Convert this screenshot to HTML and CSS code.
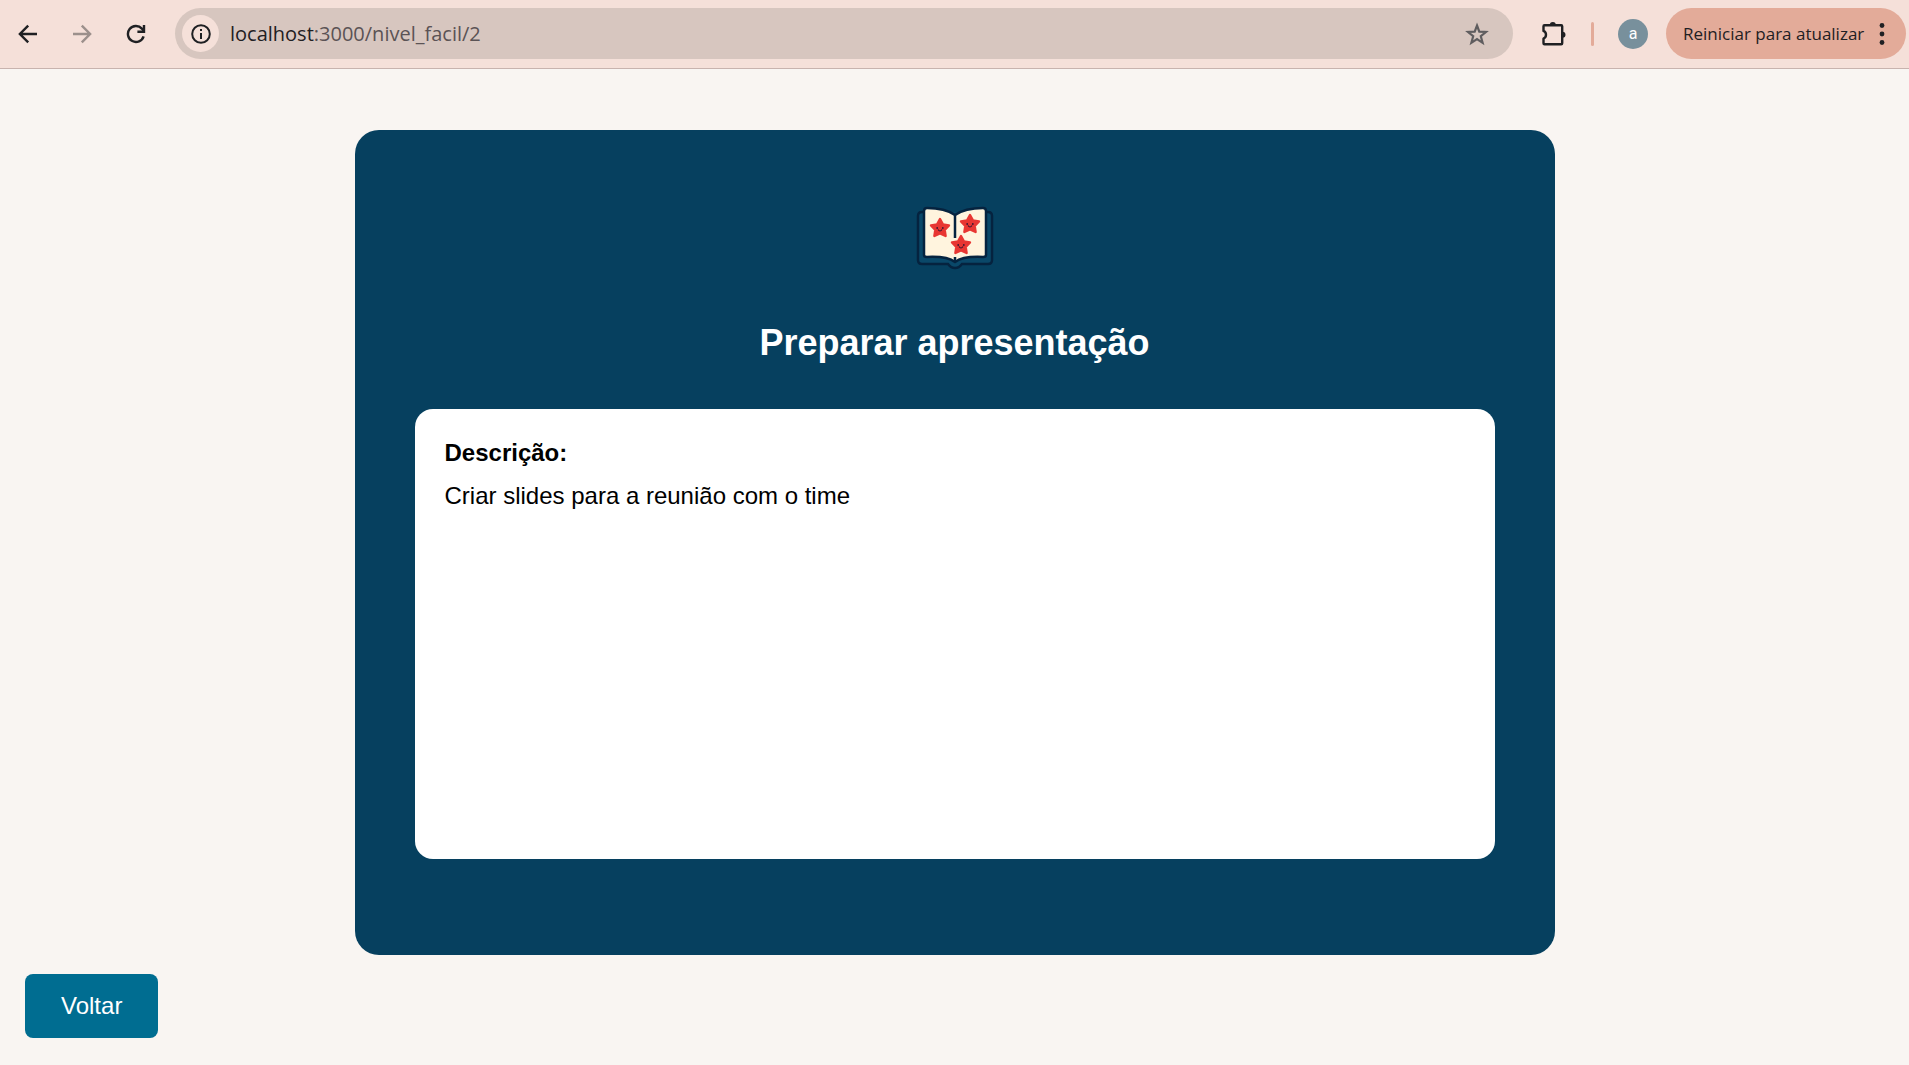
FILE: index.html
```html
<!DOCTYPE html>
<html lang="pt-BR">
<head>
<meta charset="utf-8">
<meta name="viewport" content="width=device-width, initial-scale=1">
<title>Preparar apresentação</title>
<link rel="stylesheet" href="styles.css">
</head>
<body>
<header class="toolbar">
  <nav class="nav" aria-label="Navegação">
    <button class="icon-btn" type="button" aria-label="Voltar página">
      <svg width="20" height="20" viewBox="0 0 20 20" fill="none" stroke="#1f2023" stroke-width="2.4"><path d="M19 10H2.500M10.200 1.700 1.900 10l8.300 8.300"/></svg>
    </button>
    <button class="icon-btn" type="button" aria-label="Avançar" disabled>
      <svg width="20" height="20" viewBox="0 0 20 20" fill="none" stroke="#9c908c" stroke-width="2.400"><path d="M1 10h16.500M9.800 1.700 18.100 10l-8.300 8.300"/></svg>
    </button>
    <button class="icon-btn" type="button" aria-label="Recarregar">
      <svg width="20" height="20" viewBox="0 0 20 20" fill="none" stroke="#1f2023" stroke-width="2.400"><path d="M17.600 12.300A8 8 0 1 1 15.900 4.600L18 7"/><path d="M18 1v6.700h-6.600"/></svg>
    </button>
  </nav>
  <div class="address">
    <button class="site-info" type="button" aria-label="Informações do site">
      <svg width="20" height="20" viewBox="0 0 20 20" fill="none" stroke="#1f2023" stroke-width="2"><circle cx="10" cy="10" r="8.800"/><path d="M10 9v6M10 5v2"/></svg>
    </button>
    <div class="url"><span class="host">localhost</span>:3000/nivel_facil/2</div>
    <button class="star" type="button" aria-label="Adicionar aos favoritos">
      <svg width="24" height="24" viewBox="0 0 24 24" fill="none" stroke="#5f5d5f" stroke-width="2.200"><path d="m12 3.500 2.300 6.100 6.700.4-5.200 4.200 1.800 6.600-5.600-3.700-5.600 3.700 1.800-6.600L3 10l6.700-.4z"/></svg>
    </button>
  </div>
  <div class="actions">
    <button class="icon-btn" type="button" aria-label="Extensões">
      <svg width="26" height="26" viewBox="0 0 26 26"><path d="M3.500 4.300h16.700q1 0 1 1v17q0 1-1 1H3.500q-1 0-1-1v-4.600a4.300 4.300 0 0 0 0-7.800V5.300q0-1 1-1z" fill="none" stroke="#1f2023" stroke-width="2.400" stroke-linejoin="round"/><path d="M8.800 4a3 3 0 0 1 6 0zM21.500 10.800a3 3 0 0 1 0 6z" fill="#1f2023"/></svg>
    </button>
    <span class="divider"></span>
    <button class="avatar" type="button" aria-label="Perfil">a</button>
    <button class="update" type="button">Reiniciar para atualizar
      <svg width="6" height="24" viewBox="0 0 6 24" fill="#1f2023"><circle cx="3" cy="3.500" r="2.400"/><circle cx="3" cy="12" r="2.400"/><circle cx="3" cy="20.500" r="2.400"/></svg>
    </button>
  </div>
</header>
<main class="page">
  <article class="card">
    <svg class="book" width="96" height="96" viewBox="0 0 96 96" aria-hidden="true">
      <path d="M17 16h-2q-4 0-4 4v44q0 4 4 4h26q3 4 7 4t7-4h26q4 0 4-4V20q0-4-4-4h-2" fill="#0a4869" stroke="#05233f" stroke-width="2.500"/>
      <path d="M17 15q0-3 3-3 18 0 28 7 10-7 28-7 3 0 3 3v44q0 2-3 2-20-1-28 5-8-6-28-5-3 0-3-2z" fill="#fff4de" stroke="#05233f" stroke-width="2.500" stroke-linejoin="round"/>
      <path d="M48 19v23M48 61v5" stroke="#05233f" stroke-width="2.500"/>
      <defs>
        <g id="starfish">
          <path d="M0-9 2.900-3.600 9-2.600 4.700 1.900 5.600 8 0 5.400-5.600 8l.9-6.100L-9-2.600l6.100-1z" fill="#e83632" stroke="#e83632" stroke-width="2.400" stroke-linejoin="round"/>
          <circle cx="-2.800" cy="0" r=".9" fill="#3c1832"/><circle cx="2.800" cy="0" r=".9" fill="#3c1832"/>
          <path d="M-2 1.500q2 3 4 0" fill="none" stroke="#3c1832" stroke-width="1.200"/>
        </g>
      </defs>
      <use href="#starfish" x="33" y="32"/>
      <use href="#starfish" x="63" y="28"/>
      <use href="#starfish" x="54" y="49"/>
    </svg>
    <h1 class="title">Preparar apresentação</h1>
    <section class="description">
      <h2 class="label">Descrição:</h2>
      <p class="text">Criar slides para a reunião com o time</p>
    </section>
  </article>
  <a class="back" href="#">Voltar</a>
</main>
</body>
</html>
```
FILE: styles.css
```css
* { box-sizing: border-box; }
body {
  margin: 0;
  min-height: 100vh;
  background: #f9f5f2;
  color: #000;
  font-family: "Liberation Sans", Arial, sans-serif;
}
button {
  padding: 0;
  border: 0;
  background: none;
  color: inherit;
  font: inherit;
}
svg { display: block; flex: none; }
.toolbar {
  display: flex;
  align-items: center;
  height: 69px;
  padding: 0 3px 1px 18px;
  border-bottom: 1px solid #c8b3ae;
  background: #f5e0d9;
  font-family: "Open Sans", "Noto Sans", sans-serif;
}
.nav { display: flex; gap: 34px; margin-right: 29px; }
.icon-btn { display: flex; }
.address {
  display: flex;
  flex: 1;
  align-items: center;
  height: 51px;
  padding: 0 24px 0 7px;
  border-radius: 26px;
  background: #d7c6bf;
}
.site-info {
  display: flex;
  align-items: center;
  justify-content: center;
  width: 37px;
  height: 37px;
  border-radius: 50%;
  background: #f5e0d9;
}
.url {
  flex: 1;
  margin-left: 11px;
  color: #5b5355;
  font-size: 20px;
  line-height: 28px;
}
.host { color: #1f2023; }
.actions { display: flex; align-items: center; margin-left: 28px; }
.divider {
  width: 3px;
  height: 24px;
  margin: 0 24px;
  border-radius: 2px;
  background: #e3ab99;
}
.avatar {
  width: 30px;
  height: 30px;
  margin-right: 18px;
  border-radius: 50%;
  background: #78909c;
  color: #fff;
  font-family: Roboto, sans-serif;
  font-size: 16px;
  line-height: 30px;
}
.update {
  display: flex;
  align-items: center;
  justify-content: space-between;
  width: 240px;
  height: 51px;
  padding: 0 21px 0 17px;
  border-radius: 26px;
  background: #e3ab99;
  color: #1f2023;
  font-size: 17px;
  white-space: nowrap;
}
.page { padding: 61px 25px 27px; }
.card {
  display: flex;
  flex-direction: column;
  align-items: center;
  max-width: 1200px;
  margin: 0 auto;
  padding: 66px 60px 96px;
  border-radius: 24px;
  background: #06405f;
}
.title {
  margin: 30px 0 46px;
  color: #fff;
  font-size: 36px;
  line-height: 41px;
}
.description {
  width: 100%;
  min-height: 450px;
  padding: 30px;
  border-radius: 18px;
  background: #fff;
  font-size: 24px;
  line-height: 28px;
}
.label { margin: 0 0 15px; font-size: 24px; }
.text { margin: 0; }
.back {
  display: block;
  width: fit-content;
  margin-top: 19px;
  padding: 18px 36px;
  border-radius: 8px;
  background: #006d91;
  color: #fff;
  font-size: 24px;
  line-height: 28px;
  text-decoration: none;
}
```
